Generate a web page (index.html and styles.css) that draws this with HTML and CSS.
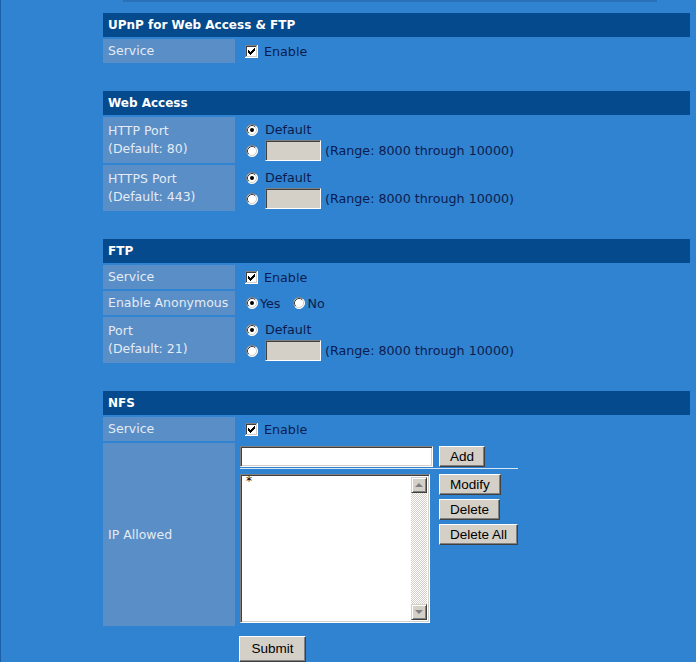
FILE: index.html
```html
<!DOCTYPE html>
<html>
<head>
<meta charset="utf-8">
<title>Network Services</title>
<link rel="stylesheet" href="styles.css">
</head>
<body>
<svg class="defs" width="0" height="0" aria-hidden="true">
  <defs>
    <symbol id="cbox" viewBox="0 0 13 13">
      <rect x="0" y="0" width="13" height="13" fill="#ffffff"/>
      <rect x="0" y="0" width="12" height="1" fill="#808080"/>
      <rect x="0" y="0" width="1" height="12" fill="#808080"/>
      <rect x="1" y="1" width="10" height="1" fill="#404040"/>
      <rect x="1" y="1" width="1" height="10" fill="#404040"/>
      <rect x="1" y="11" width="11" height="1" fill="#d4d0c8"/>
      <rect x="11" y="1" width="1" height="11" fill="#d4d0c8"/>
      <path d="M3 5h1v3H3z M4 6h1v3H4z M5 7h1v3H5z M6 6h1v3H6z M7 5h1v3H7z M8 4h1v3H8z M9 3h1v3H9z" fill="#000000"/>
    </symbol>
    <symbol id="radio" viewBox="0 0 12 12">
      <circle cx="6" cy="6" r="5.5" fill="#ffffff"/>
      <path d="M2.11 9.89 A5.5 5.5 0 0 1 9.89 2.11" fill="none" stroke="#808080" stroke-width="1"/>
      <path d="M2.82 9.18 A4.5 4.5 0 0 1 9.18 2.82" fill="none" stroke="#404040" stroke-width="1"/>
      <path d="M9.89 2.11 A5.5 5.5 0 0 1 2.11 9.89" fill="none" stroke="#ffffff" stroke-width="1"/>
      <path d="M9.18 2.82 A4.5 4.5 0 0 1 2.82 9.18" fill="none" stroke="#d4d0c8" stroke-width="1"/>
    </symbol>
    <symbol id="radioOn" viewBox="0 0 12 12">
      <use href="#radio"/>
      <circle cx="6" cy="6" r="2" fill="#000000"/>
    </symbol>
  </defs>
</svg>

<div class="topbar"></div>

<div class="main">
  <section class="sec">
    <div class="hdr">UPnP for Web Access &amp; FTP</div>
    <div class="lbl r1">Service</div>
    <div class="val r1">
      <div class="line"><svg class="cb" width="13" height="13"><use href="#cbox"/></svg>Enable</div>
    </div>
  </section>

  <section class="sec">
    <div class="hdr">Web Access</div>
    <div class="lbl r2"><span>HTTP Port</span><span>(Default: 80)</span></div>
    <div class="val r2">
      <div class="line"><svg class="rd" width="12" height="12"><use href="#radioOn"/></svg>Default</div>
      <div class="line"><svg class="rd" width="12" height="12"><use href="#radio"/></svg><input class="port" type="text" disabled>(Range: 8000 through 10000)</div>
    </div>
    <div class="lbl r2"><span>HTTPS Port</span><span>(Default: 443)</span></div>
    <div class="val r2">
      <div class="line"><svg class="rd" width="12" height="12"><use href="#radioOn"/></svg>Default</div>
      <div class="line"><svg class="rd" width="12" height="12"><use href="#radio"/></svg><input class="port" type="text" disabled>(Range: 8000 through 10000)</div>
    </div>
  </section>

  <section class="sec">
    <div class="hdr">FTP</div>
    <div class="lbl r1">Service</div>
    <div class="val r1">
      <div class="line"><svg class="cb" width="13" height="13"><use href="#cbox"/></svg>Enable</div>
    </div>
    <div class="lbl r1">Enable Anonymous</div>
    <div class="val r1">
      <div class="line"><svg class="rd tight" width="12" height="12"><use href="#radioOn"/></svg>Yes<svg class="rd tight no" width="12" height="12"><use href="#radio"/></svg>No</div>
    </div>
    <div class="lbl r2"><span>Port</span><span>(Default: 21)</span></div>
    <div class="val r2">
      <div class="line"><svg class="rd" width="12" height="12"><use href="#radioOn"/></svg>Default</div>
      <div class="line"><svg class="rd" width="12" height="12"><use href="#radio"/></svg><input class="port" type="text" disabled>(Range: 8000 through 10000)</div>
    </div>
  </section>

  <section class="sec last">
    <div class="hdr">NFS</div>
    <div class="lbl r1">Service</div>
    <div class="val r1">
      <div class="line"><svg class="cb" width="13" height="13"><use href="#cbox"/></svg>Enable</div>
    </div>
    <div class="lbl">IP Allowed</div>
    <div class="val ip">
      <div class="addline">
        <input class="ipin" type="text">
        <button class="btn" type="button">Add</button>
      </div>
      <div class="sep"></div>
      <div class="listrow">
        <div class="listbox">
          <div class="items">*</div>
          <div class="sbar">
            <div class="sbtn"><span class="arr up"></span></div>
            <div class="track"></div>
            <div class="sbtn"><span class="arr down"></span></div>
          </div>
        </div>
        <div class="btncol">
          <button class="btn" type="button">Modify</button>
          <button class="btn" type="button">Delete</button>
          <button class="btn" type="button">Delete All</button>
        </div>
      </div>
    </div>
  </section>

  <div class="submitrow"><button class="btn submit" type="button">Submit</button></div>
</div>
</body>
</html>
```

FILE: styles.css
```css
html, body {
  margin: 0;
  padding: 0;
}

body {
  background: #3083d0;
  font-family: "DejaVu Sans", Verdana, sans-serif;
  font-size: 12.7px;
  color: #0b1c4f;
  border-left: 1px solid #1c5ea8;
  min-height: 662px;
  box-sizing: border-box;
  overflow: hidden;
}

.defs {
  display: block;
  width: 0;
  height: 0;
}

.topbar {
  margin-left: 122px;
  width: 534px;
  height: 2px;
  background: #2a70b8;
}

.main {
  margin-left: 102px;
  padding-top: 11px;
  width: 587px;
}

.sec {
  display: grid;
  grid-template-columns: 132px 1fr;
  gap: 2px;
  margin-bottom: 28px;
}

.sec.last {
  margin-bottom: 10px;
}

.hdr {
  grid-column: 1 / -1;
  height: 24px;
  background: #044a8c;
  color: #ffffff;
  font-weight: bold;
  font-size: 12px;
  padding-left: 5px;
  display: flex;
  align-items: center;
}

.lbl {
  background: #5a8ec6;
  color: #e4ebf4;
  padding-left: 5px;
  display: flex;
  flex-direction: column;
  justify-content: center;
  line-height: 18px;
  font-size: 12.5px;
}

.val {
  display: flex;
  flex-direction: column;
  justify-content: center;
}

.r1 { height: 24px; }
.r2 { height: 46px; }

.line {
  display: flex;
  align-items: center;
  height: 21px;
  white-space: nowrap;
}

.cb {
  margin-left: 8px;
  margin-right: 6px;
  flex: none;
}

.rd {
  margin-left: 9px;
  margin-right: 7px;
  flex: none;
}

.rd.tight {
  margin-right: 2px;
}

.rd.no {
  margin-left: 13px;
}

input {
  font-family: "DejaVu Sans", Verdana, sans-serif;
  font-size: 12px;
  margin: 0;
  padding: 0 2px;
  box-sizing: border-box;
  border: 1px solid;
  border-color: #808080 #ffffff #ffffff #808080;
  box-shadow: inset 1px 1px #404040, inset -1px -1px #d4d0c8;
  outline: none;
}

.port {
  width: 56px;
  height: 21px;
  background: #d4d0c8;
  margin-right: 4px;
}

.val.ip {
  justify-content: flex-start;
  padding: 3px 0 3px 3px;
}

.addline {
  display: flex;
  height: 21px;
}

.ipin {
  width: 193px;
  height: 21px;
  background: #ffffff;
}

.btn {
  font-family: "Liberation Sans", Arial, sans-serif;
  font-size: 13.5px;
  color: #000000;
  background: #d4d0c8;
  height: 21px;
  margin: 0;
  padding: 0 10px;
  box-sizing: border-box;
  border: 1px solid;
  border-color: #ffffff #404040 #404040 #ffffff;
  box-shadow: inset -1px -1px #808080, inset 1px 1px #d4d0c8;
  line-height: 1;
}

.addline .btn {
  margin-left: 6px;
}

.sep {
  width: 278px;
  height: 1px;
  margin-top: 1px;
  background: #d6e6f6;
}

.listrow {
  display: flex;
  margin-top: 5px;
}

.listbox {
  width: 190px;
  height: 149px;
  box-sizing: border-box;
  background: #ffffff;
  border: 1px solid;
  border-color: #808080 #ffffff #ffffff #808080;
  box-shadow: inset 1px 1px #404040, inset -1px -1px #d4d0c8;
  display: flex;
  padding: 2px;
}

.items {
  flex: 1;
  font-family: "DejaVu Sans", Verdana, sans-serif;
  font-size: 12px;
  color: #000000;
  padding: 0 0 0 3px;
  line-height: 9px;
}

.sbar {
  width: 16px;
  display: flex;
  flex-direction: column;
}

.sbtn {
  height: 16px;
  box-sizing: border-box;
  background: #d4d0c8;
  border: 1px solid;
  border-color: #d4d0c8 #404040 #404040 #d4d0c8;
  box-shadow: inset 1px 1px #ffffff, inset -1px -1px #808080;
  display: flex;
  align-items: center;
  justify-content: center;
}

.track {
  flex: 1;
  background-color: #ffffff;
  background-image: repeating-conic-gradient(#d4d0c8 0 25%, #ffffff 0 50%);
  background-size: 2px 2px;
}

.arr {
  width: 0;
  height: 0;
  border-left: 4px solid transparent;
  border-right: 4px solid transparent;
}

.arr.up {
  border-bottom: 4px solid #808080;
}

.arr.down {
  border-top: 4px solid #808080;
}

.btncol {
  display: flex;
  flex-direction: column;
  align-items: flex-start;
  gap: 4px;
  margin-left: 9px;
}

.submitrow {
  padding-left: 136px;
}

.btn.submit {
  height: 26px;
  padding: 0 11.5px;
}
```
